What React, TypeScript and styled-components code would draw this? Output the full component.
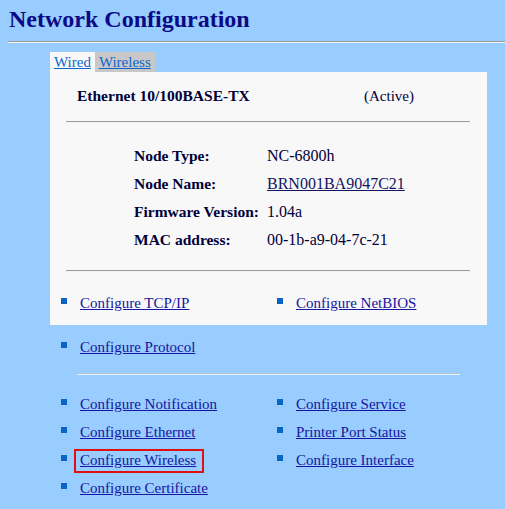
import React from "react";
import styled, { createGlobalStyle } from "styled-components";

const GlobalStyle = createGlobalStyle`
  html,
  body {
    margin: 0;
    padding: 0;
    background: #99ccff;
    font-family: "Liberation Serif", serif;
  }
`;

const nodeInfo = [
  { label: "Node Type:", value: "NC-6800h" },
  { label: "Node Name:", value: "BRN001BA9047C21", link: true },
  { label: "Firmware Version:", value: "1.04a" },
  { label: "MAC address:", value: "00-1b-a9-04-7c-21" },
];

const panelLinks = [{ text: "Configure TCP/IP" }, { text: "Configure NetBIOS" }];

const menuLinks = [
  { text: "Configure Notification" },
  { text: "Configure Service" },
  { text: "Configure Ethernet" },
  { text: "Printer Port Status" },
  { text: "Configure Wireless", marked: true },
  { text: "Configure Interface" },
  { text: "Configure Certificate" },
];

type LinkItem = { text: string; marked?: boolean };

const LinkGrid: React.FC<{ items: LinkItem[] }> = ({ items }) => (
  <Grid>
    {items.map((item, index) => (
      <Item key={index}>
        <Bullet />
        <MenuLink href="#" $marked={item.marked}>
          {item.text}
        </MenuLink>
      </Item>
    ))}
  </Grid>
);

export default function App() {
  return (
    <Page>
      <GlobalStyle />
      <Title>Network Configuration</Title>
      <Rule $top={8} $left={8} />
      <Content>
        <Tabs>
          <Tab $active>
            <TabLink href="#">Wired</TabLink>
          </Tab>
          <Tab>
            <TabLink href="#">Wireless</TabLink>
          </Tab>
        </Tabs>
        <Panel>
          <HeaderRow>
            <Interface>Ethernet 10/100BASE-TX</Interface>
            <Status>(Active)</Status>
          </HeaderRow>
          <Rule $top={15} $left={16} $right={17} />
          <InfoTable>
            {nodeInfo.map((row) => (
              <React.Fragment key={row.label}>
                <Label>{row.label}</Label>
                <Value>
                  {row.link ? <ValueLink href="#">{row.value}</ValueLink> : row.value}
                </Value>
              </React.Fragment>
            ))}
          </InfoTable>
          <Rule $top={16} $left={16} $right={17} />
          <Spaced $top={17}>
            <LinkGrid items={panelLinks} />
          </Spaced>
        </Panel>
        <Spaced $top={8}>
          <LinkGrid items={[{ text: "Configure Protocol" }]} />
        </Spaced>
        <Rule $top={12} $left={27} $width={383} $light />
        <Spaced $top={15}>
          <LinkGrid items={menuLinks} />
        </Spaced>
      </Content>
    </Page>
  );
}

const Page = styled.div`
  font-family: "Liberation Serif", serif;
  color: #00003a;
  background: #99ccff;
  min-height: 509px;
`;

const Title = styled.h1`
  margin: 0;
  padding: 5px 0 0 9px;
  font-family: "Liberation Serif", serif;
  font-size: 24px;
  line-height: 28px;
  font-weight: bold;
  color: #0a0a86;
`;

const Rule = styled.hr<{
  $top: number;
  $left: number;
  $right?: number;
  $width?: number;
  $light?: boolean;
}>`
  height: 0;
  margin: ${(p) => p.$top}px ${(p) => p.$right ?? 0}px 0 ${(p) => p.$left}px;
  ${(p) => (p.$width ? `width: ${p.$width}px;` : "")}
  border: none;
  border-top: 1px solid ${(p) => (p.$light ? "#b8c4d4" : "#9a9a9a")};
  border-bottom: 1px solid ${(p) => (p.$light ? "#e6f0fb" : "#f4f4f4")};
`;

const Content = styled.div`
  margin: 9px 0 0 50px;
`;

const Tabs = styled.div`
  display: flex;
  height: 20px;
`;

const Tab = styled.div<{ $active?: boolean }>`
  padding: 0 4px;
  font-size: 15px;
  line-height: 20px;
  background: ${(p) => (p.$active ? "#f8f8f8" : "#c8c8c8")};
`;

const TabLink = styled.a`
  font-family: "Liberation Serif", serif;
  color: #1166cc;
  text-decoration: underline;
`;

const Panel = styled.div`
  width: 437px;
  padding: 14px 0 8px;
  background: #f8f8f8;
`;

const HeaderRow = styled.div`
  display: grid;
  grid-template-columns: 287px auto;
  padding-left: 27px;
  line-height: 20px;
`;

const Interface = styled.span`
  font-size: 15.5px;
  font-weight: bold;
`;

const Status = styled.span`
  font-size: 15px;
`;

const InfoTable = styled.div`
  display: grid;
  grid-template-columns: 133px auto;
  grid-auto-rows: 28px;
  margin-top: 19px;
  padding-left: 84px;
  line-height: 28px;
`;

const Label = styled.div`
  font-size: 15.5px;
  font-weight: bold;
`;

const Value = styled.div`
  font-size: 16px;
`;

const ValueLink = styled.a`
  color: #14145e;
  text-decoration: underline;
`;

const Spaced = styled.div<{ $top: number }>`
  margin-top: ${(p) => p.$top}px;
`;

const Grid = styled.div`
  display: grid;
  grid-template-columns: 216px auto;
  grid-auto-rows: 28px;
  padding-left: 11px;
`;

const Item = styled.div`
  display: flex;
  align-items: flex-start;
  font-size: 15px;
  line-height: 28px;
`;

const Bullet = styled.span`
  flex: none;
  width: 6px;
  height: 6px;
  margin: 9px 13px 0 0;
  background: #0a64c8;
`;

const MenuLink = styled.a<{ $marked?: boolean }>`
  position: relative;
  display: inline-block;
  color: #1616a0;
  text-decoration: underline;

  ${(p) =>
    p.$marked
      ? `
    &::after {
      content: "";
      position: absolute;
      top: 3px;
      bottom: 1px;
      left: -6px;
      right: -8px;
      border: 2px solid #e01010;
    }
  `
      : ""}
`;
